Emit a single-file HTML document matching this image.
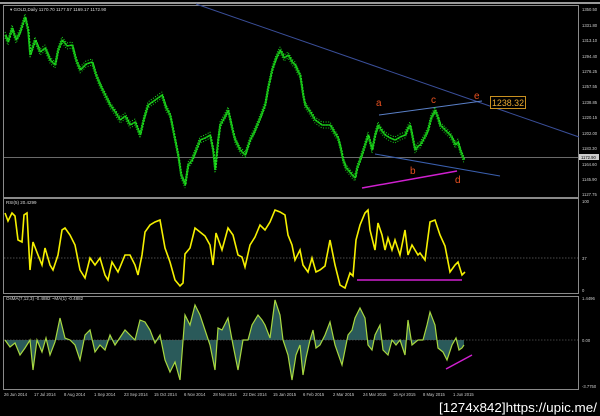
<!DOCTYPE html>
<html><head><meta charset="utf-8"><style>
html,body{margin:0;padding:0;background:#000;width:600px;height:416px;overflow:hidden}
svg{display:block}
text{font-family:"Liberation Sans",sans-serif}
</style></head><body>
<svg width="600" height="416" viewBox="0 0 600 416" xmlns="http://www.w3.org/2000/svg">
<defs>
<polyline id="pr" fill="none" stroke-linejoin="bevel" points="5,35 8,42 12,28 16,40 20,32 25,17 28,30 30,55 35,40 40,52 45,48 50,60 55,65 58,50 62,40 67,46 72,45 76,60 80,70 86,64 92,62 96,75 100,85 105,95 110,105 115,112 120,120 125,116 130,125 135,122 140,135 144,118 148,105 155,100 162,95 166,108 170,115 174,135 178,155 181,175 185,185 188,165 192,160 196,150 200,140 205,138 210,135 213,150 215,170 218,140 220,125 224,118 228,110 232,128 235,140 240,150 245,155 250,140 255,130 260,118 265,105 268,88 272,70 276,58 280,50 284,58 288,55 292,62 295,65 298,72 300,75 303,95 305,105 310,112 315,120 322,125 330,125 334,132 338,138 341,150 343,160 346,168 348,170 352,175 355,178 357,168 360,160 364,148 368,135 370,142 372,150 375,135 378,125 381,130 385,135 390,138 395,140 400,137 405,135 408,128 410,125 413,140 415,150 418,146 420,145 424,138 428,130 431,118 435,110 438,118 440,125 445,130 450,135 453,140 455,145 458,142 460,150 462,155 464,160"/>
</defs>
<rect width="600" height="416" fill="#000"/>
<rect x="0" y="2" width="600" height="2" fill="#9a9a9a"/>
<g fill="none" stroke="#8a8a8a" stroke-width="1">
<rect x="3.5" y="5.5" width="575" height="192"/>
<rect x="3.5" y="198.5" width="575" height="95"/>
<rect x="3.5" y="296.5" width="575" height="93"/>
</g>
<text x="10" y="11" font-size="4.5" fill="#ddd">▾ GOLD,Daily  1170.70 1177.57 1169.17 1172.90</text>
<line x1="4" y1="157.5" x2="578" y2="157.5" stroke="#6a6a6a" stroke-width="1"/>
<line x1="196" y1="4" x2="579" y2="137" stroke="#3a4f9a" stroke-width="1"/>
<line x1="379" y1="115" x2="482" y2="101" stroke="#5a80c8" stroke-width="1"/>
<line x1="375" y1="154" x2="500" y2="176" stroke="#3a5fae" stroke-width="1"/>
<line x1="362" y1="188" x2="457" y2="171" stroke="#d020d0" stroke-width="1.5"/>
<use href="#pr" stroke="#14b014" stroke-width="1.6"/>
<use href="#pr" transform="translate(0,-3)" stroke="#1ee01e" stroke-width="1" stroke-dasharray="1 1.6"/>
<use href="#pr" transform="translate(0,3)" stroke="#18c818" stroke-width="1" stroke-dasharray="1 1.6"/>
<use href="#pr" transform="translate(1,0)" stroke="#22ee22" stroke-width="0.8" stroke-dasharray="2 1"/>
<text x="376" y="106" font-size="10" fill="#e85020">a</text>
<text x="410" y="174" font-size="10" fill="#e85020">b</text>
<text x="431" y="103" font-size="10" fill="#e85020">c</text>
<text x="455" y="183" font-size="10" fill="#e85020">d</text>
<text x="474" y="99" font-size="10" fill="#e85020">e</text>
<rect x="490.5" y="96.5" width="35" height="12" fill="#000" stroke="#c89020" stroke-width="1"/>
<text x="492" y="106" font-size="9" fill="#e8a830" textLength="32" lengthAdjust="spacingAndGlyphs">1238.32</text>
<g font-size="4.2" fill="#ccc">
<text x="582" y="11">1350.50</text><text x="582" y="27">1331.80</text><text x="582" y="42">1313.10</text>
<text x="582" y="58">1294.40</text><text x="582" y="73">1276.25</text><text x="582" y="88">1257.55</text>
<text x="582" y="104">1238.85</text><text x="582" y="119">1220.15</text><text x="582" y="135">1202.00</text>
<text x="582" y="150">1183.30</text><text x="582" y="166">1164.60</text><text x="582" y="181">1145.90</text>
<text x="582" y="196">1127.75</text>
</g>
<rect x="579" y="154" width="20" height="6" fill="#ccc"/>
<text x="581" y="159" font-size="4.2" fill="#000">1172.90</text>
<text x="6" y="204" font-size="4.5" fill="#ddd">RSI(5) 20.4299</text>
<line x1="4" y1="258" x2="578" y2="258" stroke="#666" stroke-width="0.8" stroke-dasharray="1.5,1.5"/>
<polyline fill="none" stroke="#f5f000" stroke-width="1.6" points="5,213 8,221 12,213 15,216 18,240 22,242 24,215 27,213 30,270 33,242 38,255 42,265 45,248 50,265 53,270 58,255 62,230 65,228 70,235 75,245 80,270 85,278 90,258 95,265 100,258 105,275 108,280 112,262 118,272 125,255 130,255 135,265 138,275 142,255 145,232 150,225 155,222 160,220 165,248 170,262 175,280 180,286 183,283 185,254 190,248 195,228 200,232 205,236 210,245 213,265 216,233 222,250 228,228 233,235 238,255 242,257 245,267 250,245 255,237 260,225 265,230 270,222 275,210 280,212 285,215 288,235 292,245 295,260 300,250 303,265 308,272 312,258 316,272 320,270 325,266 330,240 335,265 340,285 345,288 350,273 353,276 356,240 360,225 365,213 368,210 370,230 375,250 378,223 382,235 385,250 388,238 392,250 395,240 400,255 405,230 408,255 412,245 418,255 420,253 425,260 430,222 435,220 440,235 445,246 450,272 455,265 458,262 462,275 465,272"/>
<line x1="357" y1="280" x2="462" y2="280" stroke="#d020d0" stroke-width="1.5"/>
<g font-size="4.2" fill="#ccc"><text x="582" y="203">100</text><text x="582" y="260">37</text><text x="582" y="292">0</text></g>
<text x="6" y="300" font-size="4.5" fill="#ddd">OsMA(7,12,3) -0.4882  ~MA(1) -0.4882</text>
<g>
<polygon fill="#2a5a5a" points="5,340 10,347 15,343 20,355 25,348 30,340 33,370 37,340 42,352 46,338 50,355 55,342 60,318 65,338 70,340 75,345 80,360 85,335 90,330 95,352 100,345 105,350 110,335 115,345 125,330 130,335 135,340 140,320 145,322 150,330 155,343 160,335 165,360 170,372 175,362 180,380 185,315 190,325 195,305 200,315 205,330 210,345 215,370 218,328 222,330 228,318 233,345 238,370 243,340 248,340 252,325 258,315 262,320 265,325 270,338 275,300 280,315 283,340 288,355 292,380 296,355 300,345 303,375 306,358 310,340 313,330 316,348 320,345 325,335 330,322 335,345 342,365 348,335 352,330 355,318 360,308 365,318 368,345 372,350 375,335 380,325 383,350 388,355 392,340 396,345 400,340 405,355 408,320 412,345 418,340 423,340 427,325 430,312 435,325 438,348 443,352 447,360 452,345 456,338 459,350 462,348 464,345 464,340"/>
<line x1="4" y1="340" x2="578" y2="340" stroke="#555" stroke-width="0.8" stroke-dasharray="1.5,1.5"/>
<polyline fill="none" stroke="#a8d840" stroke-width="1.2" points="5,340 10,347 15,343 20,355 25,348 30,340 33,370 37,340 42,352 46,338 50,355 55,342 60,318 65,338 70,340 75,345 80,360 85,335 90,330 95,352 100,345 105,350 110,335 115,345 125,330 130,335 135,340 140,320 145,322 150,330 155,343 160,335 165,360 170,372 175,362 180,380 185,315 190,325 195,305 200,315 205,330 210,345 215,370 218,328 222,330 228,318 233,345 238,370 243,340 248,340 252,325 258,315 262,320 265,325 270,338 275,300 280,315 283,340 288,355 292,380 296,355 300,345 303,375 306,358 310,340 313,330 316,348 320,345 325,335 330,322 335,345 342,365 348,335 352,330 355,318 360,308 365,318 368,345 372,350 375,335 380,325 383,350 388,355 392,340 396,345 400,340 405,355 408,320 412,345 418,340 423,340 427,325 430,312 435,325 438,348 443,352 447,360 452,345 456,338 459,350 462,348 464,345"/>
</g>
<line x1="446" y1="369" x2="472" y2="355" stroke="#d020d0" stroke-width="1.5"/>
<g font-size="4.2" fill="#ccc"><text x="582" y="300">1.4496</text><text x="582" y="342">0.00</text><text x="582" y="388">-3.7750</text></g>
<g font-size="4.2" fill="#ccc">
<text x="4" y="396">26 Jun 2014</text><text x="34" y="396">17 Jul 2014</text><text x="64" y="396">8 Aug 2014</text>
<text x="94" y="396">1 Sep 2014</text><text x="124" y="396">23 Sep 2014</text><text x="154" y="396">15 Oct 2014</text>
<text x="184" y="396">6 Nov 2014</text><text x="213" y="396">28 Nov 2014</text><text x="243" y="396">22 Dec 2014</text>
<text x="273" y="396">15 Jan 2015</text><text x="303" y="396">6 Feb 2015</text><text x="333" y="396">2 Mar 2015</text>
<text x="363" y="396">24 Mar 2015</text><text x="393" y="396">16 Apr 2015</text><text x="423" y="396">8 May 2015</text>
<text x="453" y="396">1 Jun 2015</text>
</g>
<text x="439" y="412" font-size="13" fill="#fff" font-family="DejaVu Sans Mono, monospace" textLength="158" lengthAdjust="spacingAndGlyphs">[1274x842]https://upic.me/</text>
</svg>
</body></html>
